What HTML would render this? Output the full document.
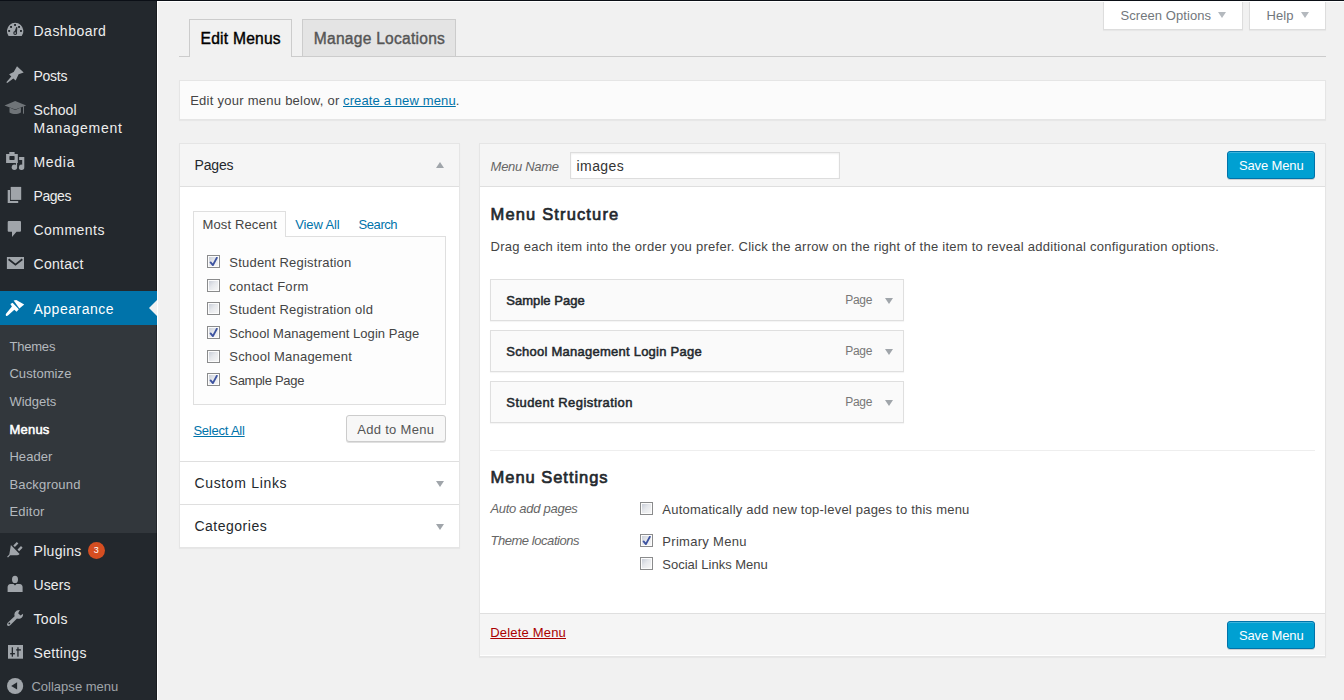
<!DOCTYPE html>
<html><head><meta charset="utf-8">
<style>
*{box-sizing:border-box;margin:0;padding:0}
html,body{width:1344px;height:700px;overflow:hidden;background:#f1f1f1;font-family:"Liberation Sans",sans-serif;color:#444;position:relative}
.a{position:absolute}
.t{position:absolute;white-space:nowrap;line-height:1;z-index:5}
svg.ic{position:absolute;overflow:visible}
.cb{position:absolute;width:13px;height:13px;border:1px solid #8a8b8c;background:#fcfcfc}
.cb::before{content:"";position:absolute;left:1px;top:1px;width:9px;height:9px;background:linear-gradient(135deg,#c9ced8 0%,#e6e8ec 45%,#f6f6f6 100%)}

.cb svg{position:absolute;left:1px;top:1px;z-index:1}
.tri-d{position:absolute;width:0;height:0;border-left:4px solid transparent;border-right:4px solid transparent;border-top:6px solid #a0a5aa}
.tri-u{position:absolute;width:0;height:0;border-left:4px solid transparent;border-right:4px solid transparent;border-bottom:6px solid #a0a5aa}
.btnp{position:absolute;background:#00a0d2;border:1px solid #0073aa;border-radius:3px;box-shadow:inset 0 1px 0 rgba(120,200,230,.5),0 1px 0 rgba(0,0,0,.15)}
.mitem{position:absolute;left:490px;width:414px;height:42px;box-shadow:0 1px 1px rgba(0,0,0,.04);background:#fafafa;border:1px solid #dfdfdf}
</style></head><body>
<!-- sidebar -->
<div class="a" style="left:0;top:0;width:157px;height:700px;background:#23282d"></div>
<div class="a" style="left:0;top:291px;width:157px;height:34px;background:#0073aa"></div>
<div class="a" style="left:0;top:325px;width:157px;height:208px;background:#32373c"></div>
<div class="a" style="left:149px;top:299.5px;width:0;height:0;border-top:8.5px solid transparent;border-bottom:8.5px solid transparent;border-right:8px solid #f1f1f1;z-index:21"></div>
<div class="a" style="left:88px;top:542px;width:17px;height:17px;border-radius:50%;background:#d54e21"></div>
<div class="t" style="left:93.8px;top:546.4px;font-size:9px;color:#fff">3</div>


<!-- icons -->
<svg class="ic" style="left:0;top:18px" width="30" height="30" viewBox="0 18 30 30"><path fill="#a0a5aa" d="M8.55 36 A8.25 8.3 0 1 1 21.75 36 Z"/><g fill="#23282d"><rect x="14.1" y="24" width="1.9" height="1.9"/><rect x="10.1" y="26" width="1.9" height="1.9"/><rect x="18.1" y="26" width="1.9" height="1.9"/><rect x="8.2" y="30" width="1.9" height="1.9"/><rect x="20" y="30" width="1.9" height="1.9"/></g><path fill="none" stroke="#23282d" stroke-width="1.1" d="M15 31.6 L16.8 27.2 L16.4 32.6"/><circle fill="none" stroke="#23282d" stroke-width="1.1" cx="15.2" cy="33" r="1.4"/></svg>
<svg class="ic" style="left:0;top:60px" width="30" height="30" viewBox="0 60 30 30"><path fill="#a0a5aa" d="M17 66.3 L23.7 72.4 L18.6 74.2 L15.7 80.5 L13.3 78.4 L7.3 83 L6.3 82.2 L11.3 76.5 L9.1 74.3 L13.7 72 Z"/></svg>
<svg class="ic" style="left:0;top:95px" width="30" height="30" viewBox="0 95 30 30"><g fill="#6f7478"><path d="M15.2 101 L4.5 105.5 L15.2 109.6 L26.2 105.5 Z"/><path d="M9.5 107.5 V112.4 C11.5 113.5 13.3 113.9 15.2 113.9 C17.1 113.9 18.9 113.5 20.9 112.4 V107.5 L15.2 109.9 Z"/><rect x="23" y="106.2" width="1" height="7.5"/></g></svg>
<svg class="ic" style="left:0;top:145px" width="30" height="30" viewBox="0 145 30 30"><path fill="#a0a5aa" fill-rule="evenodd" d="M9.3 151.9 H14.6 V153.9 H17.8 V162.9 H6.1 V153.9 H9.3 Z M10 156 Q9.4 156 9.4 156.6 V159.3 Q9.4 159.9 10 159.9 H14 Q14.6 159.9 14.6 159.3 V156.6 Q14.6 156 14 156 Z"/><path fill="#a0a5aa" d="M19.1 157.1 H24.3 V167.3 A2.7 2.7 0 1 1 22.2 164.7 V160.1 H19.1 Z"/><circle fill="#a0a5aa" cx="14.4" cy="167.3" r="2.7"/><rect fill="#a0a5aa" x="15.9" y="163" width="1.2" height="4"/></svg>
<svg class="ic" style="left:0;top:180px" width="30" height="30" viewBox="0 180 30 30"><path fill="#a0a5aa" d="M10.7 186.9 H21.2 V199.9 H10.7 Z"/><path fill="#a0a5aa" d="M7.7 189.9 H10 V201 H18.2 V202.9 H7.7 Z"/></svg>
<svg class="ic" style="left:0;top:215px" width="30" height="30" viewBox="0 215 30 30"><path fill="#a0a5aa" d="M8.7 221 H20 Q21 221 21 222 V230.7 Q21 231.7 20 231.7 H16.5 L12 236.9 V231.7 H8.7 Q7.7 231.7 7.7 230.7 V222 Q7.7 221 8.7 221 Z"/></svg>
<svg class="ic" style="left:0;top:250px" width="30" height="30" viewBox="0 250 30 30"><path fill="#a0a5aa" d="M6.9 257 H24 V269 H6.9 Z"/><path fill="none" stroke="#23282d" stroke-width="1.8" d="M8.6 259.2 L15.45 264.6 L22.3 259.2"/></svg>
<svg class="ic" style="left:0;top:293px" width="30" height="30" viewBox="0 293 30 30"><g fill="#ffffff"><path d="M13.6 300.4 L16.3 299.9 L24.2 304.6 L19.4 308.6 Z"/><path d="M10.4 304 L12.6 302.8 L18.8 309.3 L16.6 311.7 L14.3 309.7 L7.9 315.6 Q6.6 316.3 5.9 315.4 Q5.4 314.6 6.2 313.5 L11.9 306.6 Z"/></g></svg>
<svg class="ic" style="left:0;top:535px" width="30" height="30" viewBox="0 535 30 30"><path fill="#a0a5aa" d="M10.9 545.1 L19.6 553.9 Q18.5 555.3 17 555.3 L10.2 555.3 L8 557.6 L7.1 556.7 L9.3 554.5 Z"/><path fill="#a0a5aa" d="M13.3 545.4 L16.8 541.9 L18.4 543.5 L14.9 547 Z M17.5 549.6 L21 546.1 L22.6 547.7 L19.1 551.2 Z"/></svg>
<svg class="ic" style="left:0;top:570px" width="30" height="30" viewBox="0 570 30 30"><ellipse fill="#a0a5aa" cx="15" cy="579.4" rx="3" ry="3.7"/><path fill="#a0a5aa" d="M7.6 592 V587 Q7.6 584.3 10.6 583.9 L13.5 583.9 L15 585.5 L16.5 583.9 L19.6 583.9 Q22.6 584.3 22.6 587 V592 Z"/></svg>
<svg class="ic" style="left:0;top:604px" width="30" height="30" viewBox="0 604 30 30"><path fill="#a0a5aa" d="M19.8 610.1 L18.2 613.2 L20.5 615.6 L23.1 613.8 Q23.2 617.4 20.4 618.5 Q18.5 619.1 17 618.4 L10.2 625.3 Q8.6 626.6 7.4 625.5 Q6.4 624.2 7.7 622.8 L14.6 616.2 Q13.9 614 15 612.2 Q16.6 610 19.8 610.1 Z"/><circle fill="#23282d" cx="9.3" cy="623.4" r="0.9"/></svg>
<svg class="ic" style="left:0;top:640px" width="30" height="30" viewBox="0 640 30 30"><path fill="#a0a5aa" d="M8 645 H23 V658.7 H8 Z"/><g fill="#23282d"><rect x="11.7" y="647.3" width="1.3" height="9.4"/><rect x="10.2" y="653" width="4.7" height="1.4"/><rect x="17.3" y="647.3" width="1.3" height="9.4"/><rect x="16.2" y="649.2" width="4.7" height="1.4"/></g></svg>
<svg class="ic" style="left:0;top:672px" width="30" height="30" viewBox="0 672 30 30"><circle fill="#a0a5aa" cx="15.1" cy="686" r="8.1"/><path fill="#23282d" d="M11.2 685.9 L17.1 682.3 V689.6 Z"/></svg>
<!-- top buttons -->
<div class="a" style="left:1103px;top:-1px;width:140px;height:31px;background:#fff;border:1px solid #ddd;box-shadow:0 1px 1px rgba(0,0,0,.04)"></div>
<div class="tri-d" style="left:1218px;top:12px;border-top-color:#b4b9be"></div>
<div class="a" style="left:1249px;top:-1px;width:77px;height:31px;background:#fff;border:1px solid #ddd;box-shadow:0 1px 1px rgba(0,0,0,.04)"></div>
<div class="tri-d" style="left:1301px;top:12px;border-top-color:#b4b9be"></div>

<!-- nav tabs -->
<div class="a" style="left:179px;top:56px;width:1147px;height:1px;background:#ccc"></div>
<div class="a" style="left:189px;top:19px;width:103px;height:38px;background:#f1f1f1;border:1px solid #ccc;border-bottom:none"></div>
<div class="a" style="left:302px;top:19px;width:154px;height:37px;background:#e4e4e4;border:1px solid #ccc;border-bottom:none"></div>

<!-- notice -->
<div class="a" style="left:179px;top:80px;width:1147px;height:40px;background:#fbfbfb;border:1px solid #e5e5e5;box-shadow:0 1px 1px rgba(0,0,0,.04)"></div>

<!-- left panel -->
<div class="a" style="left:179px;top:143px;width:281px;height:405px;background:#fff;border:1px solid #e5e5e5;box-shadow:0 1px 1px rgba(0,0,0,.04)"></div>
<div class="a" style="left:180px;top:144px;width:279px;height:43px;background:#f5f5f5;border-bottom:1px solid #dfdfdf"></div>
<div class="tri-u" style="left:436px;top:162px"></div>
<div class="a" style="left:193px;top:211px;width:93px;height:26px;background:#fdfdfd;border:1px solid #dfdfdf;border-bottom:none;z-index:2"></div>
<div class="a" style="left:193px;top:236px;width:253px;height:169px;background:#fdfdfd;border:1px solid #dfdfdf"></div>
<div class="a" style="left:346px;top:415px;width:100px;height:27px;background:#f7f7f7;border:1px solid #ccc;border-radius:3px;box-shadow:0 1px 0 #e0e0e0"></div>
<div class="a" style="left:180px;top:461px;width:279px;height:1px;background:#dfdfdf"></div>
<div class="a" style="left:180px;top:504px;width:279px;height:1px;background:#dfdfdf"></div>
<div class="tri-d" style="left:436px;top:481px"></div>
<div class="tri-d" style="left:436px;top:524px"></div>
<div class="cb on" style="left:207px;top:255.1px"><svg width="11" height="11" viewBox="0 0 11 11"><path fill="none" stroke="#3d53a0" stroke-width="1.9" stroke-linecap="round" stroke-linejoin="round" d="M1.6 5.4L3.9 8.1 7.8 0.9"/></svg></div>
<div class="cb" style="left:207px;top:278.7px"></div>
<div class="cb" style="left:207px;top:302.3px"></div>
<div class="cb on" style="left:207px;top:325.9px"><svg width="11" height="11" viewBox="0 0 11 11"><path fill="none" stroke="#3d53a0" stroke-width="1.9" stroke-linecap="round" stroke-linejoin="round" d="M1.6 5.4L3.9 8.1 7.8 0.9"/></svg></div>
<div class="cb" style="left:207px;top:349.5px"></div>
<div class="cb on" style="left:207px;top:373.1px"><svg width="11" height="11" viewBox="0 0 11 11"><path fill="none" stroke="#3d53a0" stroke-width="1.9" stroke-linecap="round" stroke-linejoin="round" d="M1.6 5.4L3.9 8.1 7.8 0.9"/></svg></div>

<!-- right panel -->
<div class="a" style="left:479px;top:143px;width:847px;height:514px;background:#fff;border:1px solid #e5e5e5;box-shadow:0 1px 1px rgba(0,0,0,.04)"></div>
<div class="a" style="left:480px;top:144px;width:845px;height:43px;background:#f5f5f5;border-bottom:1px solid #dfdfdf"></div>
<div class="a" style="left:570px;top:152px;width:270px;height:27px;background:#fff;border:1px solid #ddd;box-shadow:inset 0 1px 2px rgba(0,0,0,.07)"></div>
<div class="btnp" style="left:1227px;top:151px;width:88px;height:28px"></div>
<div class="mitem" style="top:279px"></div>
<div class="mitem" style="top:330px"></div>
<div class="mitem" style="top:381px"></div>
<div class="tri-d" style="left:885px;top:298px"></div>
<div class="tri-d" style="left:885px;top:349px"></div>
<div class="tri-d" style="left:885px;top:400px"></div>
<div class="a" style="left:490px;top:450px;width:825px;height:1px;background:#eee"></div>
<div class="a" style="left:480px;top:613px;width:845px;height:42px;background:#f5f5f5;border-top:1px solid #dfdfdf"></div>
<div class="btnp" style="left:1227px;top:621px;width:88px;height:28px"></div>
<div class="cb" style="left:640px;top:502.0px"></div>
<div class="cb on" style="left:640px;top:534.0px"><svg width="11" height="11" viewBox="0 0 11 11"><path fill="none" stroke="#3d53a0" stroke-width="1.9" stroke-linecap="round" stroke-linejoin="round" d="M1.6 5.4L3.9 8.1 7.8 0.9"/></svg></div>
<div class="cb" style="left:640px;top:557.0px"></div>

<div class="t" style="left:33.5px;top:24.1px;font-size:14px;color:#eeeeee;letter-spacing:0.49px;">Dashboard</div>
<div class="t" style="left:33.5px;top:68.7px;font-size:14px;color:#eeeeee;letter-spacing:-0.25px;">Posts</div>
<div class="t" style="left:33.5px;top:103.1px;font-size:14px;color:#eeeeee;letter-spacing:0.04px;">School</div>
<div class="t" style="left:33.5px;top:120.5px;font-size:14px;color:#eeeeee;letter-spacing:0.75px;">Management</div>
<div class="t" style="left:33.5px;top:155.1px;font-size:14px;color:#eeeeee;letter-spacing:0.71px;">Media</div>
<div class="t" style="left:33.5px;top:189.1px;font-size:14px;color:#eeeeee;letter-spacing:-0.43px;">Pages</div>
<div class="t" style="left:33.5px;top:223.1px;font-size:14px;color:#eeeeee;letter-spacing:0.47px;">Comments</div>
<div class="t" style="left:33.5px;top:257.1px;font-size:14px;color:#eeeeee;letter-spacing:0.29px;">Contact</div>
<div class="t" style="left:33.5px;top:302.1px;font-size:14px;color:#ffffff;letter-spacing:0.50px;">Appearance</div>
<div class="t" style="left:9.4px;top:340.0px;font-size:13px;color:#b4b9be;letter-spacing:-0.19px;">Themes</div>
<div class="t" style="left:9.4px;top:367.0px;font-size:13px;color:#b4b9be;letter-spacing:0.07px;">Customize</div>
<div class="t" style="left:9.4px;top:394.6px;font-size:13px;color:#b4b9be;">Widgets</div>
<div class="t" style="left:9.4px;top:422.6px;font-size:13px;color:#ffffff;-webkit-text-stroke:0.52px #ffffff;letter-spacing:0.24px;">Menus</div>
<div class="t" style="left:9.4px;top:450.0px;font-size:13px;color:#b4b9be;letter-spacing:0.07px;">Header</div>
<div class="t" style="left:9.4px;top:478.0px;font-size:13px;color:#b4b9be;letter-spacing:0.18px;">Background</div>
<div class="t" style="left:9.4px;top:505.0px;font-size:13px;color:#b4b9be;letter-spacing:0.21px;">Editor</div>
<div class="t" style="left:33.5px;top:543.7px;font-size:14px;color:#eeeeee;letter-spacing:0.30px;">Plugins</div>
<div class="t" style="left:33.5px;top:578.1px;font-size:14px;color:#eeeeee;letter-spacing:0.11px;">Users</div>
<div class="t" style="left:33.5px;top:612.1px;font-size:14px;color:#eeeeee;letter-spacing:0.33px;">Tools</div>
<div class="t" style="left:33.5px;top:646.1px;font-size:14px;color:#eeeeee;letter-spacing:0.34px;">Settings</div>
<div class="t" style="left:31.4px;top:680.0px;font-size:13px;color:#a0a5aa;letter-spacing:0.02px;">Collapse menu</div>
<div class="t" style="left:1120.4px;top:8.6px;font-size:13px;color:#72777c;letter-spacing:0.08px;">Screen Options</div>
<div class="t" style="left:1266.4px;top:8.6px;font-size:13px;color:#72777c;letter-spacing:0.15px;">Help</div>
<div class="t" style="left:200.5px;top:30.9px;font-size:15.6px;color:#000000;-webkit-text-stroke:0.39px #000000;letter-spacing:0.24px;">Edit Menus</div>
<div class="t" style="left:313.8px;top:30.9px;font-size:15.6px;color:#555555;-webkit-text-stroke:0.39px #555555;letter-spacing:0.24px;">Manage Locations</div>
<div class="t" style="left:190.2px;top:94.1px;font-size:13px;color:#444444;letter-spacing:0.26px;">Edit your menu below, or</div>
<div class="t" style="left:343.0px;top:94.1px;font-size:13px;color:#0073aa;letter-spacing:0.13px;text-decoration:underline;">create a new menu</div>
<div class="t" style="left:455.8px;top:94.1px;font-size:13px;color:#444444;">.</div>
<div class="t" style="left:194.6px;top:157.9px;font-size:14px;color:#23282d;letter-spacing:-0.18px;">Pages</div>
<div class="t" style="left:202.5px;top:217.7px;font-size:13px;color:#444444;letter-spacing:0.13px;">Most Recent</div>
<div class="t" style="left:295.2px;top:217.7px;font-size:13px;color:#0073aa;letter-spacing:-0.11px;">View All</div>
<div class="t" style="left:358.6px;top:217.7px;font-size:13px;color:#0073aa;letter-spacing:-0.44px;">Search</div>
<div class="t" style="left:229.3px;top:255.9px;font-size:13px;color:#444444;letter-spacing:0.22px;">Student Registration</div>
<div class="t" style="left:229.3px;top:279.5px;font-size:13px;color:#444444;letter-spacing:0.29px;">contact Form</div>
<div class="t" style="left:229.3px;top:303.1px;font-size:13px;color:#444444;letter-spacing:0.21px;">Student Registration old</div>
<div class="t" style="left:229.3px;top:326.7px;font-size:13px;color:#444444;letter-spacing:0.05px;">School Management Login Page</div>
<div class="t" style="left:229.3px;top:350.3px;font-size:13px;color:#444444;letter-spacing:0.20px;">School Management</div>
<div class="t" style="left:229.3px;top:373.9px;font-size:13px;color:#444444;letter-spacing:-0.29px;">Sample Page</div>
<div class="t" style="left:193.4px;top:423.9px;font-size:13px;color:#0073aa;letter-spacing:-0.22px;text-decoration:underline;">Select All</div>
<div class="t" style="left:357.2px;top:422.5px;font-size:13px;color:#555555;letter-spacing:0.31px;">Add to Menu</div>
<div class="t" style="left:194.4px;top:475.6px;font-size:14px;color:#23282d;letter-spacing:0.67px;">Custom Links</div>
<div class="t" style="left:194.4px;top:518.7px;font-size:14px;color:#23282d;letter-spacing:0.51px;">Categories</div>
<div class="t" style="left:490.6px;top:159.8px;font-size:13px;color:#666666;font-style:italic;letter-spacing:-0.29px;">Menu Name</div>
<div class="t" style="left:576.6px;top:158.9px;font-size:14px;color:#333333;letter-spacing:0.39px;">images</div>
<div class="t" style="left:1238.9px;top:159.0px;font-size:13px;color:#ffffff;letter-spacing:-0.12px;">Save Menu</div>
<div class="t" style="left:490.6px;top:206.2px;font-size:16.5px;color:#23282d;-webkit-text-stroke:0.66px #23282d;letter-spacing:1.14px;">Menu Structure</div>
<div class="t" style="left:490.6px;top:239.5px;font-size:13px;color:#444444;letter-spacing:0.26px;">Drag each item into the order you prefer. Click the arrow on the right of the item to reveal additional configuration options.</div>
<div class="t" style="left:506.3px;top:294.4px;font-size:13px;color:#23282d;-webkit-text-stroke:0.52px #23282d;letter-spacing:0.03px;">Sample Page</div>
<div class="t" style="left:845.2px;top:294.2px;font-size:12px;color:#777777;letter-spacing:-0.28px;">Page</div>
<div class="t" style="left:506.3px;top:345.4px;font-size:13px;color:#23282d;-webkit-text-stroke:0.52px #23282d;letter-spacing:0.25px;">School Management Login Page</div>
<div class="t" style="left:845.2px;top:345.2px;font-size:12px;color:#777777;letter-spacing:-0.28px;">Page</div>
<div class="t" style="left:506.3px;top:396.4px;font-size:13px;color:#23282d;-webkit-text-stroke:0.52px #23282d;letter-spacing:0.44px;">Student Registration</div>
<div class="t" style="left:845.2px;top:396.2px;font-size:12px;color:#777777;letter-spacing:-0.28px;">Page</div>
<div class="t" style="left:490.6px;top:468.9px;font-size:16.5px;color:#23282d;-webkit-text-stroke:0.66px #23282d;letter-spacing:0.96px;">Menu Settings</div>
<div class="t" style="left:490.4px;top:501.8px;font-size:13px;color:#666666;font-style:italic;letter-spacing:-0.28px;">Auto add pages</div>
<div class="t" style="left:490.4px;top:534.0px;font-size:13px;color:#666666;font-style:italic;letter-spacing:-0.44px;">Theme locations</div>
<div class="t" style="left:662.3px;top:502.9px;font-size:13px;color:#444444;letter-spacing:0.22px;">Automatically add new top-level pages to this menu</div>
<div class="t" style="left:662.3px;top:534.6px;font-size:13px;color:#444444;letter-spacing:0.30px;">Primary Menu</div>
<div class="t" style="left:662.3px;top:557.5px;font-size:13px;color:#444444;">Social Links Menu</div>
<div class="t" style="left:490.3px;top:625.9px;font-size:13px;color:#aa0000;letter-spacing:0.18px;text-decoration:underline;">Delete Menu</div>
<div class="t" style="left:1238.9px;top:629.0px;font-size:13px;color:#ffffff;letter-spacing:-0.12px;">Save Menu</div>
<div class="a" style="left:0;top:0;width:1344px;height:1px;background:#0b0f16;z-index:20"></div>
<div class="a" style="left:157px;top:1px;width:1187px;height:1px;background:#fff;z-index:20"></div>
<div class="a" style="left:156px;top:0;width:1px;height:291px;background:rgba(0,0,0,.28);z-index:19"></div>
<div class="a" style="left:156px;top:325px;width:1px;height:375px;background:rgba(0,0,0,.28);z-index:19"></div>
<div class="a" style="left:157px;top:1px;width:1px;height:699px;background:#fff;z-index:19"></div>
</body></html>
